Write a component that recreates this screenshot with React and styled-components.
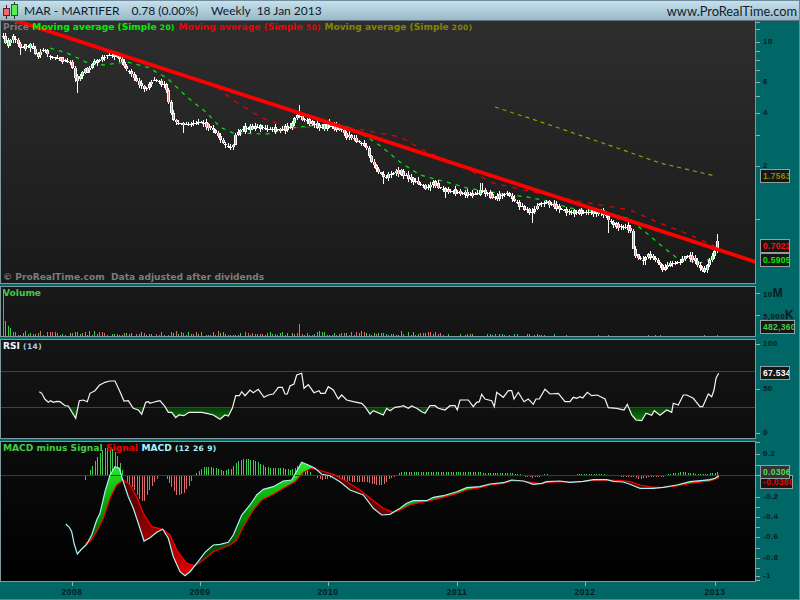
import React from "react";
import styled, { createGlobalStyle } from "styled-components";

const Global = createGlobalStyle`
  html, body { margin: 0; padding: 0; background: #006666; }
  #root { width: 800px; height: 600px; overflow: hidden; }
`;

const LEGEND = `"DejaVu Sans", "Liberation Sans", sans-serif`;
const SCALE = `"Liberation Sans", Arial, sans-serif`;
const TEAL = "#006666";
const EDGE = "#7f9a9f";

/* ---------- digitised data, page coordinates ---------- */
const pairs = (a) => a.reduce((o, v, i) => (i % 2 ? o : [...o, [v, a[i + 1]]]), []);
const zoomL = (a, oy) => pairs(a).map(([x, y]) => [x / 3, oy + y / 3]);
const zoomR = (a, oy) => pairs(a).map(([x, y]) => [400 + x / 3, oy + y / 3]);
const interp = (pts, x) => {
  if (x <= pts[0][0]) return pts[0][1];
  for (let i = 1; i < pts.length; i++) {
    if (x <= pts[i][0]) {
      const [x0, y0] = pts[i - 1];
      const [x1, y1] = pts[i];
      return y0 + ((y1 - y0) * (x - x0)) / (x1 - x0 || 1);
    }
  }
  return pts[pts.length - 1][1];
};
const toLine = (pts) => pts.map(([x, y]) => `${x.toFixed(1)},${y.toFixed(1)}`).join(" ");
const rnd = (n) => {
  const s = Math.sin(n * 12.9898) * 43758.5453;
  return s - Math.floor(s);
};

const price = pairs([
  3, 36, 5, 43, 8, 43, 12, 38, 15, 39, 18, 44, 20, 48, 24, 47, 30, 46, 34, 50, 36, 57, 40, 52, 44, 49, 48, 55, 52, 57, 56, 58,
  60, 59, 65, 60, 70, 62, 72, 67, 75, 80, 78, 78, 82, 72, 88, 70, 92, 64, 100, 60, 108, 55, 116, 55, 120, 60, 125, 68, 130, 72,
  135, 80, 140, 84, 145, 90, 150, 82, 155, 80, 160, 82, 165, 85, 168, 100, 172, 118, 175, 122, 182, 124, 190, 124, 200, 122,
  208, 126, 215, 132, 222, 142, 228, 146, 232, 148, 235, 135, 240, 130, 250, 128, 260, 127, 268, 129, 280, 130, 290, 127,
  296, 115, 302, 118, 310, 122, 320, 127, 330, 126, 340, 128, 345, 135, 352, 137, 360, 142, 366, 148, 370, 160, 378, 172,
  385, 178, 395, 172, 400, 172, 427, 188, 433, 182, 443, 190, 457, 192, 473, 195, 483, 191, 495, 198, 507, 193, 513, 200,
  527, 210, 532, 212, 537, 205, 547, 202, 563, 210, 570, 212, 590, 212, 603, 212, 608, 220, 617, 226, 630, 228, 632, 243,
  634, 258, 636, 255, 643, 260, 648, 254, 660, 265, 662, 270, 667, 265, 680, 262, 685, 256, 693, 258, 697, 265, 702, 270,
  705, 270, 708, 263, 715, 250, 717, 240, 718, 238,
]);
const wickOverride = [
  [20, 0, 55], [77, 0, 93], [183, 0, 133], [300, 105, 0], [330, 119, 0], [383, 0, 184], [444, 0, 198], [481, 183, 0],
  [532, 0, 223], [609, 0, 233], [632, 0, 247], [644, 0, 265], [718, 234, 0],
];
const candles = [];
for (let i = 0, x = 3; x <= 719; i++, x += 2.47) {
  const mid = interp(price, x);
  const prev = interp(price, x - 2.47);
  const spread = rnd(i + 7) > 0.5 ? 2.5 + rnd(i + 11) * 3 : 0.6;
  const dir = mid > prev ? 1 : mid < prev ? -1 : rnd(i + 3) > 0.5 ? 1 : -1;
  const big = Math.abs(mid - prev) > 2;
  const open = big ? prev : mid - (dir * spread) / 2;
  const close = big ? mid : mid + (dir * spread) / 2;
  let hi = Math.min(open, close) - 0.5 - rnd(i + 40) * 3;
  let lo = Math.max(open, close) + 0.5 + rnd(i + 90) * 3;
  wickOverride.forEach(([wx, h, l]) => {
    if (Math.abs(wx - x) < 1.3) {
      if (h) hi = h;
      if (l) lo = l;
    }
  });
  candles.push({ x: Math.round(x), open, close, hi, lo });
}

const maGreen = pairs([
  50, 48, 67, 53, 88, 63, 103, 65, 127, 62, 147, 67, 167, 78, 187, 97, 207, 113, 220, 127, 233, 133, 267, 134, 290, 128, 317, 125,
  347, 127, 367, 137, 382, 147, 400, 162, 420, 175, 443, 181, 467, 188, 497, 193, 527, 197, 543, 200, 570, 208, 600, 212,
  627, 218, 643, 230, 663, 247, 677, 258, 700, 263, 715, 257,
]);
const maRed = pairs([
  217, 87, 233, 100, 260, 117, 290, 128, 320, 127, 353, 128, 400, 137, 427, 152, 460, 165, 493, 183, 533, 192, 583, 202, 630, 210,
  657, 222, 683, 232, 717, 247,
]);
const maOlive = pairs([495, 107, 547, 124, 623, 150, 660, 163, 715, 176]);

const rsi = [
  ...zoomL([
    118, 335, 125, 340, 135, 358, 145, 367, 152, 362, 160, 367, 170, 364, 180, 365, 195, 377, 205, 378, 215, 395, 227, 415, 238, 362,
    250, 360, 262, 365, 270, 340, 285, 332, 298, 316, 315, 307, 330, 303, 345, 303, 360, 335, 372, 363, 385, 362, 400, 385, 415, 390,
    425, 403, 437, 367, 445, 365, 450, 370, 460, 367, 470, 364, 480, 362, 495, 380, 505, 397, 515, 397, 527, 413, 537, 405, 552, 407,
    567, 397, 580, 397, 605, 397, 620, 400, 640, 405, 660, 418, 675, 405, 685, 408, 697, 385, 707, 347, 718, 347, 725, 335, 735, 347,
    750, 330, 760, 338, 775, 328, 792, 352, 805, 345, 820, 342, 835, 322, 847, 322, 855, 342, 862, 342, 870, 318, 882, 312, 890, 285,
    905, 280, 912, 325, 925, 314, 942, 338, 957, 332, 962, 340, 975, 340, 985, 320, 1000, 330, 1015, 357, 1025, 345, 1040, 360,
    1060, 365, 1085, 370, 1095, 380, 1110, 402, 1120, 392, 1150, 405, 1160, 385, 1170, 392, 1185, 382, 1200, 380,
  ], 280),
  ...zoomR([
    10, 377, 25, 385, 35, 378, 50, 385, 65, 395, 75, 400, 90, 377, 105, 377, 115, 385, 135, 390, 150, 377, 165, 377, 172, 390, 180, 360,
    205, 360, 220, 380, 230, 367, 238, 365, 245, 343, 255, 357, 275, 362, 283, 380, 290, 337, 310, 352, 325, 332, 335, 332, 342, 357,
    355, 337, 372, 365, 385, 357, 400, 373, 408, 357, 418, 357, 435, 328, 450, 342, 475, 340, 495, 365, 510, 365, 520, 352, 530, 355,
    540, 350, 548, 354, 562, 337, 575, 347, 592, 345, 615, 357, 625, 383, 650, 385, 672, 390, 682, 373, 695, 405, 708, 420, 725, 422,
    738, 400, 755, 406, 763, 392, 780, 406, 800, 390, 815, 397, 820, 370, 835, 375, 850, 345, 860, 345, 880, 355, 900, 380, 908, 380,
    925, 342, 935, 350, 942, 330, 948, 295, 956, 280,
  ], 280),
];
const rsiFill = `M${toLine([[rsi[0][0], 407], ...rsi, [rsi[rsi.length - 1][0], 407]])}Z`;

const macd = [
  ...zoomL([
    197, 267, 208, 277, 215, 290, 222, 325, 232, 357, 245, 342, 260, 328, 275, 300, 290, 255, 300, 235, 315, 170, 330, 120, 345, 95,
    358, 100, 370, 140, 385, 185, 400, 220, 415, 265, 432, 318, 450, 308, 470, 292, 488, 283, 505, 310, 520, 365, 540, 410, 555, 422,
    570, 410, 590, 385, 615, 352, 640, 330, 660, 328, 685, 322, 700, 300, 725, 240, 750, 210, 770, 180, 790, 163, 820, 155, 850, 138,
    875, 135, 905, 82, 925, 90, 945, 100, 965, 118, 990, 122, 1020, 140, 1050, 165, 1090, 180, 1120, 220, 1145, 240, 1170, 238, 1200, 220,
  ], 435),
  ...zoomR([
    20, 205, 40, 197, 80, 197, 100, 187, 130, 182, 170, 170, 200, 158, 240, 155, 270, 147, 310, 143, 335, 135, 370, 138, 400, 148,
    425, 145, 440, 140, 480, 138, 510, 142, 550, 139, 580, 134, 620, 134, 640, 139, 670, 141, 690, 148, 720, 160, 760, 160, 790, 157,
    830, 150, 870, 140, 910, 136, 930, 134, 945, 130, 956, 122,
  ], 435),
];
const signal = [
  ...zoomL([
    255, 325, 270, 320, 290, 290, 310, 250, 330, 190, 350, 150, 370, 135, 390, 150, 410, 185, 430, 235, 455, 275, 488, 283, 510, 300,
    530, 345, 560, 385, 585, 392, 610, 375, 640, 350, 690, 330, 710, 315, 730, 275, 760, 225, 785, 195, 820, 178, 850, 160, 885, 140,
    910, 112, 935, 100, 965, 108, 1000, 118, 1040, 140, 1080, 165, 1110, 190, 1150, 220, 1180, 232, 1200, 225,
  ], 435),
  ...zoomR([
    30, 210, 60, 202, 90, 197, 130, 187, 170, 176, 200, 165, 240, 158, 270, 150, 310, 145, 335, 138, 370, 138, 400, 143, 425, 147,
    440, 142, 480, 140, 510, 141, 550, 139, 580, 136, 620, 135, 660, 137, 690, 140, 720, 150, 760, 157, 790, 157, 830, 153, 870, 145,
    910, 140, 930, 138, 945, 133, 956, 128,
  ], 435),
];
const histEnvelope = [
  ...zoomL([
    255, 135, 268, 110, 283, 80, 298, 55, 313, 40, 328, 38, 340, 45, 352, 65, 366, 105, 372, 121, 385, 150, 400, 160, 420, 195, 432, 200,
    445, 170, 460, 145, 475, 125, 490, 118, 505, 140, 520, 165, 532, 183, 550, 175, 565, 155, 580, 125, 595, 108, 610, 97, 630, 96,
    650, 100, 670, 107, 695, 100, 710, 80, 725, 72, 760, 74, 780, 85, 800, 97, 830, 100, 850, 100, 870, 105, 890, 95, 905, 90, 925, 108,
    940, 122, 965, 135, 985, 130, 1020, 130, 1050, 140, 1090, 140, 1130, 150, 1150, 148, 1170, 130, 1190, 122,
  ], 435),
  ...zoomR([
    0, 110, 50, 110, 200, 110, 250, 113, 340, 115, 360, 118, 370, 125, 400, 128, 420, 125, 430, 118, 500, 120, 530, 118, 610, 118,
    625, 124, 690, 125, 720, 132, 750, 125, 795, 125, 800, 118, 850, 111, 900, 118, 945, 113, 956, 111,
  ], 435),
];
const ZERO = 475.5;
const histBars = [];
for (let i = 0, x = 85; x <= 719; i++, x += 2.47) {
  histBars.push({ x: Math.round(x), y: interp(histEnvelope, x) });
}

/* Area between MACD and Signal, split by which one is on top */
const greenSeg = [];
const redSeg = [];
for (let x = 86; x < 719; x++) {
  const m0 = interp(macd, x), s0 = interp(signal, x), m1 = interp(macd, x + 1), s1 = interp(signal, x + 1);
  const d = `M${x},${m0.toFixed(1)}L${x + 1},${m1.toFixed(1)}L${x + 1},${s1.toFixed(1)}L${x},${s0.toFixed(1)}Z`;
  (m0 + m1 < s0 + s1 ? greenSeg : redSeg).push(d);
}

const volumeBars = [];
for (let i = 0, x = 3; x <= 719; i++, x += 2.47) {
  const px = Math.round(x);
  const r = rnd(i + 200);
  const r2 = rnd(i + 300);
  let h;
  if (px < 16) h = [46, 15, 10, 8, 4, 4][i] || 3;
  else if (px < 445) h = r > 0.12 ? 1 + r2 * r2 * 4 : 0;
  else if (px < 560) h = r > 0.5 ? 1 + r2 * 1.2 : 0;
  else h = r > 0.88 ? 1 : 0;
  if (px === 299 || px === 300) h = 12;
  if (px === 481) h = 5;
  if (px === 718) h = 2;
  if (h > 0) volumeBars.push({ x: px, h, up: i < 1 ? false : i < 4 ? true : rnd(i + 500) > 0.5 });
}

/* ---------- styled parts ---------- */
const Page = styled.div`
  width: 800px;
  height: 600px;
  background: ${TEAL};
  display: flex;
  flex-direction: column;
  overflow: hidden;
  box-sizing: border-box;
  border-right: 1px solid #5f8f92;
  font-family: ${LEGEND};
`;
const Header = styled.header`
  height: 21px;
  box-sizing: border-box;
  flex: none;
  display: flex;
  align-items: center;
  padding: 0 2px 0 3px;
  background: linear-gradient(#c6e0ec, #9ab9c6);
  border-top: 1px solid #6f8d9c;
  border-bottom: 1px solid #5f7480;
  font-family: Lato, "Liberation Sans", Arial, sans-serif;
  font-size: 12px;
  color: #0c1c30;
  white-space: nowrap;
`;
const Logo = styled.svg`
  width: 17px;
  height: 17px;
  flex: none;
  margin-right: 4px;
`;
const Title = styled.span`
  margin-right: ${(p) => p.$gap}px;
`;
const Site = styled.span`
  margin-left: auto;
  font-size: 12.8px;
`;
const Stack = styled.main`
  flex: none;
  display: flex;
  flex-direction: column;
  gap: 2px;
`;
const Row = styled.section`
  height: ${(p) => p.$h}px;
  flex: none;
  display: grid;
  grid-template-columns: 756px 1fr;
`;
const Panel = styled.div`
  position: relative;
  box-sizing: border-box;
  overflow: hidden;
  border: 1px solid ${EDGE};
  border-top-width: ${(p) => (p.$noTop ? 0 : 1)}px;
  background: linear-gradient(${(p) => p.$from}, ${(p) => p.$to});
`;
const Plot = styled.svg`
  display: block;
  width: 754px;
  height: 100%;
`;
const Legend = styled.div`
  position: absolute;
  left: 2px;
  top: ${(p) => p.$y}px;
  display: flex;
  gap: 3.5px;
  align-items: baseline;
  font-size: 9.1px;
  font-weight: 700;
  line-height: 12px;
  white-space: nowrap;
`;
const Name = styled.span`
  color: ${(p) => p.$c};
`;
const Param = styled.span`
  font-size: 7.5px;
  font-weight: 700;
  letter-spacing: 0.4px;
  color: ${(p) => p.$c ?? "inherit"};
`;
const Axis = styled.div`
  position: relative;
`;
const Tick = styled.div`
  position: absolute;
  left: 0;
  top: ${(p) => p.$y}px;
  width: 4px;
  height: 1px;
  background: #8fb0b0;
`;
const TickLabel = styled.div`
  position: absolute;
  left: 7px;
  top: ${(p) => p.$y - 6}px;
  height: 12px;
  line-height: 12px;
  font-family: ${SCALE};
  font-size: 8px;
  font-weight: 700;
  letter-spacing: 0.4px;
  color: #071c1c;
  white-space: nowrap;
`;
const Unit = styled.span`
  font-size: 12px;
  letter-spacing: 0;
`;
const Badge = styled.div`
  position: absolute;
  left: 4px;
  top: ${(p) => p.$y}px;
  width: ${(p) => p.$w}px;
  height: 14px;
  box-sizing: border-box;
  background: ${(p) => p.$bg ?? "#161616"};
  border: 1px solid #8f9fa2;
  color: ${(p) => p.$c};
  font-family: ${SCALE};
  font-size: 8.5px;
  font-weight: 700;
  line-height: 12px;
  letter-spacing: 0.3px;
  padding-left: 2px;
  white-space: nowrap;
  overflow: hidden;
`;
const DateAxis = styled.footer`
  position: relative;
  flex: none;
  height: 18px;
  box-sizing: border-box;
  border-bottom: 1px solid #4f8a8c;
`;
const DateTick = styled.div`
  position: absolute;
  left: ${(p) => p.$x}px;
  top: 0;
  width: 1px;
  height: 4px;
  background: #8fb0b0;
`;
const DateLabel = styled.div`
  position: absolute;
  left: ${(p) => p.$x - 20}px;
  top: 4px;
  width: 40px;
  text-align: center;
  font-family: ${SCALE};
  font-size: 8.5px;
  font-weight: 700;
  letter-spacing: 0.5px;
  line-height: 12px;
  color: #071c1c;
`;

/* ---------- chart drawings ---------- */
const PriceChart = () => (
  <Plot viewBox="1 21 754 262" preserveAspectRatio="none">
    <polyline points={toLine(maOlive)} fill="none" stroke="#9a9a00" strokeWidth="1.2" strokeDasharray="4 4" />
    <polyline points={toLine(maRed)} fill="none" stroke="#e80000" strokeWidth="1.2" strokeDasharray="5 6" />
    <polyline points={toLine(maGreen)} fill="none" stroke="#00e000" strokeWidth="1.3" strokeDasharray="4 5" />
    {candles.map((c) => {
      const top = Math.min(c.open, c.close);
      const h = Math.max(Math.abs(c.open - c.close), 1);
      return (
        <g key={c.x} shapeRendering="crispEdges">
          <rect x={c.x} y={c.hi} width="1" height={c.lo - c.hi} fill="#fff" />
          <rect x={c.x - 1} y={top} width="3" height={h} fill="#fff" />
          {h > 2 && <rect x={c.x} y={top + 0.5} width="1" height={h - 1} fill={c.close < c.open ? "#6fe07f" : "#ff9090"} />}
        </g>
      );
    })}
    <line x1="10" y1="18.7" x2="760" y2="263.3" stroke="#ff0000" strokeWidth="3.8" />
  </Plot>
);

const VolumeChart = () => (
  <Plot viewBox="1 287 754 49" preserveAspectRatio="none" shapeRendering="crispEdges">
    {volumeBars.map((b) => (
      <rect key={b.x} x={b.x} y={336 - b.h} width="1" height={b.h} fill={b.up ? "#3fcf4f" : "#e06a6a"} />
    ))}
  </Plot>
);

const RsiChart = () => (
  <Plot viewBox="1 340 754 98" preserveAspectRatio="none">
    <defs>
      <linearGradient id="rsiGreen" gradientUnits="userSpaceOnUse" x1="0" y1="407" x2="0" y2="422">
        <stop offset="0" stopColor="#063806" />
        <stop offset="1" stopColor="#0a8a0a" />
      </linearGradient>
      <clipPath id="rsiBelow">
        <rect x="0" y="407" width="760" height="30" />
      </clipPath>
    </defs>
    <path d={rsiFill} fill="url(#rsiGreen)" clipPath="url(#rsiBelow)" />
    <g shapeRendering="crispEdges">
      <rect x="1" y="371" width="754" height="1" fill="#3333b5" />
      <rect x="1" y="407" width="754" height="1" fill="#3333b5" />
    </g>
    <polyline points={toLine(rsi)} fill="none" stroke="#f4f4f4" strokeWidth="1.2" />
  </Plot>
);

const MacdChart = () => (
  <Plot viewBox="1 442 754 139" preserveAspectRatio="none">
    <defs>
      <linearGradient id="macdGreen" gradientUnits="userSpaceOnUse" x1="0" y1="462" x2="0" y2="560">
        <stop offset="0" stopColor="#2aee2a" />
        <stop offset="0.5" stopColor="#009900" />
        <stop offset="1" stopColor="#003300" />
      </linearGradient>
      <linearGradient id="macdRed" gradientUnits="userSpaceOnUse" x1="0" y1="480" x2="0" y2="576">
        <stop offset="0" stopColor="#4a0000" />
        <stop offset="0.4" stopColor="#7a0000" />
        <stop offset="1" stopColor="#e00000" />
      </linearGradient>
    </defs>
    <g shapeRendering="crispEdges">
      {histBars.map((b) => (
        <rect
          key={b.x}
          x={b.x}
          y={Math.min(b.y, ZERO)}
          width="1"
          height={Math.abs(b.y - ZERO)}
          fill={b.y < ZERO ? "#3fc94f" : "#e06a6a"}
        />
      ))}
    </g>
    <path d={greenSeg.join("")} fill="url(#macdGreen)" />
    <path d={redSeg.join("")} fill="url(#macdRed)" />
    <rect x="1" y="475" width="754" height="1" fill="#2222ee" shapeRendering="crispEdges" />
    <polyline points={toLine(signal)} fill="none" stroke="#ff0000" strokeWidth="1.2" />
    <polyline points={toLine(macd)} fill="none" stroke="#a8f4f4" strokeWidth="1.2" />
  </Plot>
);

/* ---------- scales ---------- */
const Scale = ({ top, ticks, labels, children }) => (
  <Axis>
    {ticks.map((y) => (
      <Tick key={y} $y={y - top} />
    ))}
    {labels.map(([y, text, unit]) => (
      <TickLabel key={y} $y={y - top}>
        {text}
        {unit && <Unit>{unit}</Unit>}
      </TickLabel>
    ))}
    {children}
  </Axis>
);

const Logotype = () => (
  <Logo viewBox="0 0 17 17">
    <rect x="3" y="3" width="1" height="14" fill="#4a1a1a" />
    <rect x="0.5" y="6.5" width="6" height="7" fill="#f06a6a" stroke="#5a2a2a" />
    <rect x="11" y="0" width="1" height="17" fill="#1a3a1a" />
    <rect x="8.5" y="2.5" width="6" height="11" fill="#55ee55" stroke="#2a5a2a" />
  </Logo>
);

const YEARS = [[72, 2008], [200, 2009], [328, 2010], [457, 2011], [585, 2012], [715, 2013]];

export default function App() {
  return (
    <Page>
      <Global />
      <Header>
        <Logotype />
        <Title $gap={12}>MAR - MARTIFER</Title>
        <Title $gap={13}>0.78 (0.00%)</Title>
        <Title $gap={6}>Weekly</Title>
        <Title $gap={0}>18 Jan 2013</Title>
        <Site>www.ProRealTime.com</Site>
      </Header>
      <Stack>
        <Row $h={263}>
          <Panel $noTop $from="#2e2e2e" $to="#191919">
            <PriceChart />
            <Legend $y={0}>
              <Name $c="#7a7a7a">Price</Name>
              <Name $c="#00ee00">Moving average (Simple <Param>20)</Param></Name>
              <Name $c="#ee0000">Moving average (Simple <Param>50)</Param></Name>
              <Name $c="#858500">Moving average (Simple <Param>200)</Param></Name>
            </Legend>
            <Legend $y={250}>
              <Name $c="#7d7d7d">© ProRealTime.com&nbsp; Data adjusted after dividends</Name>
            </Legend>
          </Panel>
          <Scale
            top={21}
            ticks={[22, 29, 42, 51, 60, 70, 82, 96, 113, 135, 166, 219]}
            labels={[[42, "10"], [82, "6"], [113, "4"], [166, "2"]]}
          >
            <Badge $y={148} $w={30} $c="#8a8a00">1.7563</Badge>
            <Badge $y={218} $w={30} $c="#ff1010">0.7022</Badge>
            <Badge $y={232} $w={30} $c="#00ee00">0.5905</Badge>
          </Scale>
        </Row>
        <Row $h={51}>
          <Panel $from="#191919" $to="#141414">
            <VolumeChart />
            <Legend $y={0}>
              <Name $c="#44cc44">Volume</Name>
            </Legend>
          </Panel>
          <Scale top={286} ticks={[293, 315]} labels={[[293, "10", "M"], [315, "5,000", "K"]]}>
            <Badge $y={34} $w={35} $c="#44cc44">482,360</Badge>
          </Scale>
        </Row>
        <Row $h={100}>
          <Panel $from="#151515" $to="#0d0d0d">
            <RsiChart />
            <Legend $y={0}>
              <Name $c="#eef6ff">RSI <Param $c="#aaccff">(14)</Param></Name>
            </Legend>
          </Panel>
          <Scale top={339} ticks={[344, 389, 433]} labels={[[344, "100"], [389, "50"], [433, "0"]]}>
            <Badge $y={27} $w={30} $c="#ffffff">67.534</Badge>
          </Scale>
        </Row>
        <Row $h={141}>
          <Panel $from="#0c0c0c" $to="#000000">
            <MacdChart />
            <Legend $y={0}>
              <Name $c="#44cc44">MACD minus Signal</Name>
              <Name $c="#ee0000">Signal</Name>
              <Name $c="#aaf4ff">MACD <Param>(12 26 9)</Param></Name>
            </Legend>
          </Panel>
          <Scale
            top={441}
            ticks={[442, 454, 465, 475, 497, 507, 517, 527, 537, 548, 558, 568, 576, 580]}
            labels={[[454, "0.2"], [497, "-0.2"], [517, "-0.4"], [537, "-0.6"], [558, "-0.8"], [576, "-1"]]}
          >
            <Badge $y={34} $w={33} $c="#ee0000">-0.0380</Badge>
            <Badge $y={24} $w={30} $c="#55dd55" $bg="#333333">0.0306</Badge>
          </Scale>
        </Row>
      </Stack>
      <DateAxis>
        {YEARS.map(([x, y]) => (
          <React.Fragment key={y}>
            <DateTick $x={x} />
            <DateLabel $x={x}>{y}</DateLabel>
          </React.Fragment>
        ))}
      </DateAxis>
    </Page>
  );
}
